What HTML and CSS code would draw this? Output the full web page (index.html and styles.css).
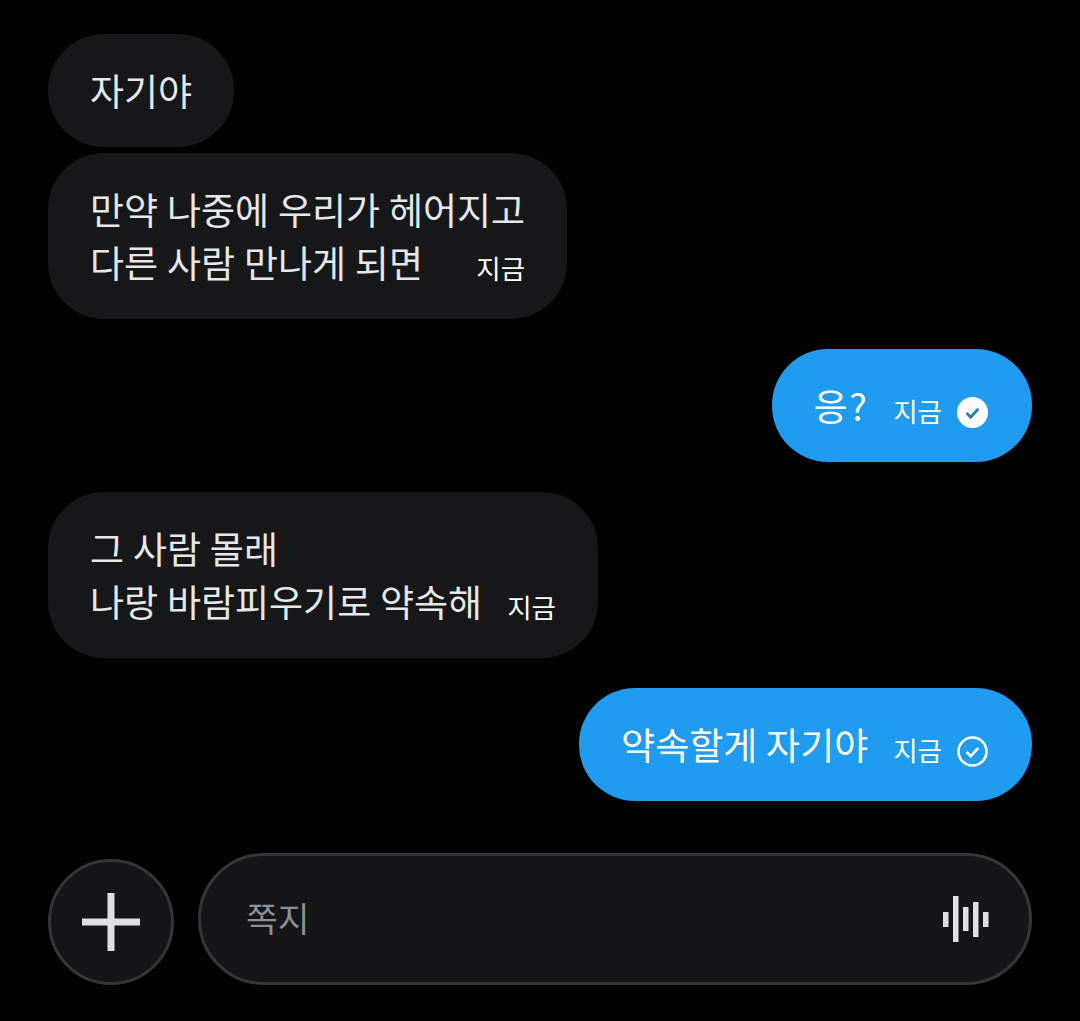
FILE: index.html
```html
<!DOCTYPE html>
<html lang="ko">
<head>
  <meta charset="UTF-8">
  <meta name="viewport" content="width=device-width, initial-scale=1.0">
  <link rel="stylesheet" href="styles.css">
  <title>쪽지</title>
</head>
<body>

  <div class="chat">
    <div class="bubble incoming">
      <div class="line">자기야</div>
    </div>
    <div class="bubble incoming next">
      <div class="line">만약 나중에 우리가 헤어지고</div>
      <div class="line">
        <span>다른 사람 만나게 되면</span>
        <span class="time">지금</span>
      </div>
    </div>

    <div class="bubble outgoing group">
      <div class="line">
        <span class="short-text">응?</span>
        <span class="time">지금</span>
        <svg class="check" viewBox="0 0 31 31">
          <circle cx="15.5" cy="15.5" r="15.5" fill="#fff"/>
          <path d="M9.5 16l4.2 4.2 7.6-8.4" fill="none" stroke="#2b7fb8" stroke-width="2.8"/>
        </svg>
      </div>
    </div>

    <div class="bubble incoming group">
      <div class="line">그 사람 몰래</div>
      <div class="line">
        <span>나랑 바람피우기로 약속해</span>
        <span class="time">지금</span>
      </div>
    </div>

    <div class="bubble outgoing group">
      <div class="line">
        <span>약속할게 자기야</span>
        <span class="time">지금</span>
        <svg class="check" viewBox="0 0 31 31">
          <circle cx="15.5" cy="15.5" r="14" fill="none" stroke="#fff" stroke-width="2.6"/>
          <path d="M9.5 16l4.2 4.2 7.6-8.4" fill="none" stroke="#fff" stroke-width="2.6"/>
        </svg>
      </div>
    </div>
  </div>

  <div class="composer">
    <button class="add-btn">
      <svg viewBox="0 0 58 58" width="58" height="58">
        <path d="M0 29h58M29 0v58" stroke="#dfe0e1" stroke-width="7"/>
      </svg>
    </button>
    <div class="input-box">
      <span class="placeholder">쪽지</span>
      <svg class="wave" viewBox="0 0 46 46" width="46" height="46">
        <rect x="0" y="16" width="5.5" height="15" />
        <rect x="10" y="0" width="5.5" height="46" />
        <rect x="20" y="11" width="5.5" height="24" />
        <rect x="30" y="6" width="5.5" height="35" />
        <rect x="40" y="16" width="5.5" height="15" />
      </svg>
    </div>
  </div>

</body>
</html>
```

FILE: styles.css
```css
body {
  font-family: "Noto Sans CJK KR", "Noto Sans", sans-serif;
  background-color: #000;
  color: #e6e7e8;
  margin: 0;
  padding: 34px 48px 0;
  font-size: 37px;
  word-spacing: -1.5px;
}

.chat {
  display: flex;
  flex-direction: column;
  align-items: flex-start;
}

.bubble {
  padding: 30px 42px;
  border-radius: 56px;
}

.next {
  margin-top: 6px;
}

.group {
  margin-top: 30px;
}

.incoming {
  background-color: #151719;
}

.outgoing {
  background-color: #1f9bf0;
  color: #fff;
  align-self: flex-end;
  padding-right: 44px;
}

.line {
  display: flex;
  justify-content: space-between;
  align-items: center;
  gap: 25px;
  height: 53px;
  line-height: 53px;
  white-space: nowrap;
}

.short-text {
  letter-spacing: 1.5px;
}

.time {
  font-size: 26.5px;
  color: #fff;
  position: relative;
  top: 5px;
}

.check {
  width: 31px;
  height: 31px;
  margin-left: -10px;
  position: relative;
  top: 7px;
}

.composer {
  display: flex;
  align-items: flex-end;
  gap: 24px;
  margin-top: 52px;
}

.add-btn {
  width: 126px;
  height: 126px;
  flex-shrink: 0;
  display: flex;
  align-items: center;
  justify-content: center;
  padding: 0;
  background-color: #131517;
  border: 3px solid #333639;
  border-radius: 50%;
}

.input-box {
  flex: 1;
  height: 132px;
  box-sizing: border-box;
  display: flex;
  align-items: center;
  justify-content: space-between;
  padding: 0 40px 0 45px;
  background-color: #131517;
  border: 3px solid #333639;
  border-radius: 66px;
}

.placeholder {
  font-size: 34.5px;
  color: #8b8e92;
  position: relative;
  top: -2px;
}

.wave {
  fill: #dfe0e1;
}
```
